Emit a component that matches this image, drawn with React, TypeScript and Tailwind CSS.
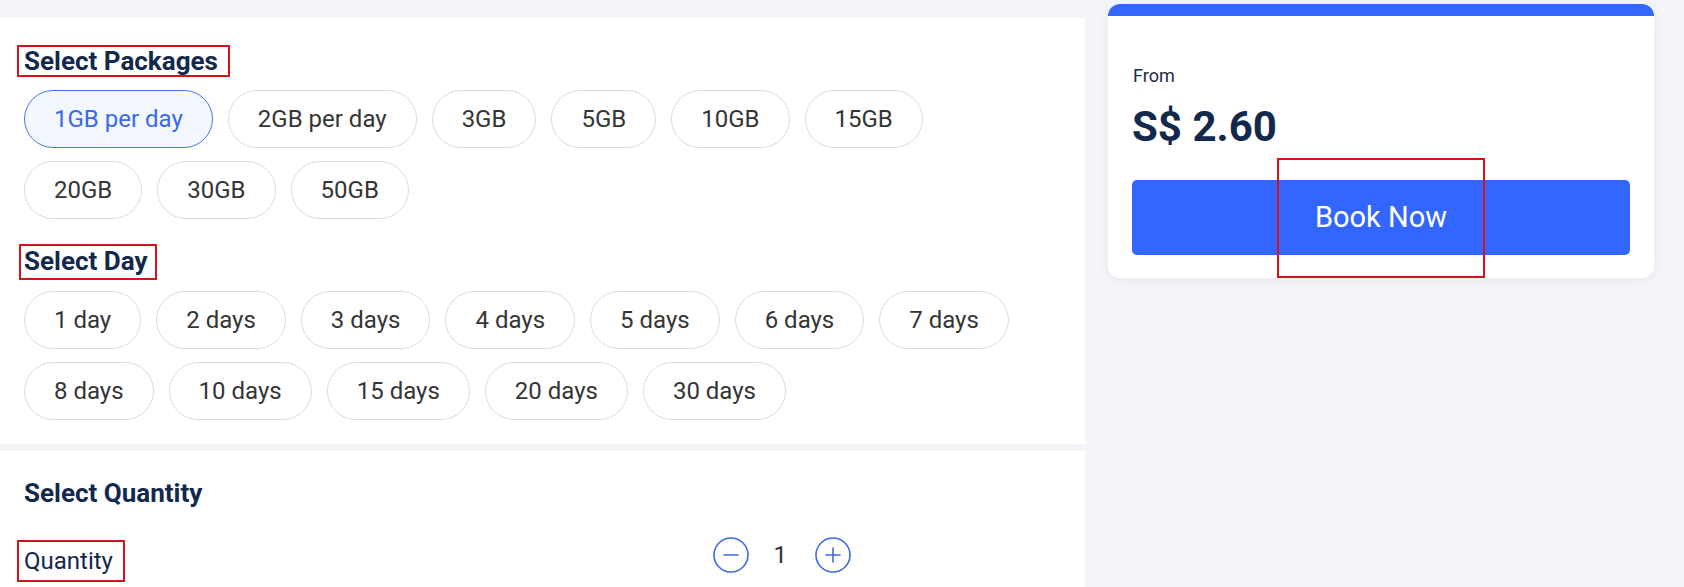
import type { ReactNode } from "react";

const packages = ["1GB per day", "2GB per day", "3GB", "5GB", "10GB", "15GB", "20GB", "30GB", "50GB"];
const days = ["1 day", "2 days", "3 days", "4 days", "5 days", "6 days", "7 days", "8 days", "10 days", "15 days", "20 days", "30 days"];

// Red annotation rectangle drawn over the captured UI.
function Mark({ className }: { className: string }) {
  return <span className={`pointer-events-none absolute border-2 border-[#d7121c] ${className}`} />;
}

function Chip({ label, active }: { label: string; active?: boolean }) {
  return (
    <button
      className={
        active
          ? "h-[58px] rounded-full border border-[#4a74ee] bg-[#f3f7ff] px-[29px] text-[24px] text-[#3a69ee]"
          : "h-[58px] rounded-full border border-[#dcdcdc] bg-white px-[29px] text-[24px] text-[#353535]"
      }
    >
      {label}
    </button>
  );
}

function Heading({ children, mark }: { children: ReactNode; mark?: string }) {
  return (
    <div className="relative h-[32px] text-[26px] font-bold leading-[32px] text-[#13294b]">
      {children}
      {mark && <Mark className={mark} />}
    </div>
  );
}

function StepIcon({ plus }: { plus?: boolean }) {
  return (
    <svg width="36" height="36" viewBox="0 0 36 36" fill="none" stroke="#4169e1" strokeWidth="1.6">
      <circle cx="18" cy="18" r="17" />
      <line x1="11" y1="18" x2="25" y2="18" strokeLinecap="round" />
      {plus && <line x1="18" y1="11" x2="18" y2="25" strokeLinecap="round" />}
    </svg>
  );
}

export default function App() {
  return (
    <div
      className="flex h-[587px] w-full overflow-hidden bg-[#f4f5f8]"
      style={{ fontFamily: "Roboto, 'Noto Sans', sans-serif" }}
    >
      {/* Left column */}
      <div className="flex w-[1085px] shrink-0 flex-col gap-[7px] pt-[18px]">
        <div className="bg-white pb-[24px] pl-[24px] pt-[27px]">
          <Heading mark="-left-[7px] -top-[0px] h-[32px] w-[213px]">Select Packages</Heading>
          <div className="mt-[13px] flex flex-wrap gap-x-[15px] gap-y-[13px] pr-[150px]">
            {packages.map((p, i) => (
              <Chip key={p} label={p} active={i === 0} />
            ))}
          </div>

          <div className="mt-[26px]">
            <Heading mark="-left-[5px] -top-[1px] h-[36px] w-[138px]">Select Day</Heading>
          </div>
          <div className="mt-[14px] flex flex-wrap gap-x-[15px] gap-y-[13px] pr-[60px]">
            {days.map((d) => (
              <Chip key={d} label={d} />
            ))}
          </div>
        </div>

        <div className="flex-1 bg-white pl-[24px] pt-[26px]">
          <Heading>Select Quantity</Heading>
          <div className="mt-[31px] flex w-[827px] items-start justify-between">
            <div className="relative h-[42px] text-[24px] leading-[42px] text-[#13294b]">
              Quantity
              <Mark className="-left-[7px] top-0 h-[42px] w-[108px]" />
            </div>
            <div className="-mt-[3px] flex items-center">
              <StepIcon />
              <span className="ml-[25px] mr-[28px] text-[24px] leading-[36px] text-[#333]">1</span>
              <StepIcon plus />
            </div>
          </div>
        </div>
      </div>

      {/* Right column */}
      <div className="ml-[23px] w-[546px] shrink-0 pt-[4px]">
        <div className="relative rounded-[12px] bg-white shadow-[0_2px_12px_rgba(20,40,80,0.06)]">
          <div className="h-[12px] rounded-t-[12px] bg-[#3366ff]" />
          <div className="px-[24px] pb-[23px] pt-[47px]">
            <div className="pl-[1px] text-[18px] leading-[26px] text-[#1e2b45]">From</div>
            <div className="mt-[13px] text-[42px] font-bold leading-[50px] text-[#13294b]">S$ 2.60</div>
            <button className="mt-[28px] h-[75px] w-full rounded-[5px] bg-[#3366ff] text-[29px] text-white">
              Book Now
            </button>
          </div>
          <Mark className="left-[169px] top-[154px] h-[120px] w-[208px]" />
        </div>
      </div>
    </div>
  );
}
